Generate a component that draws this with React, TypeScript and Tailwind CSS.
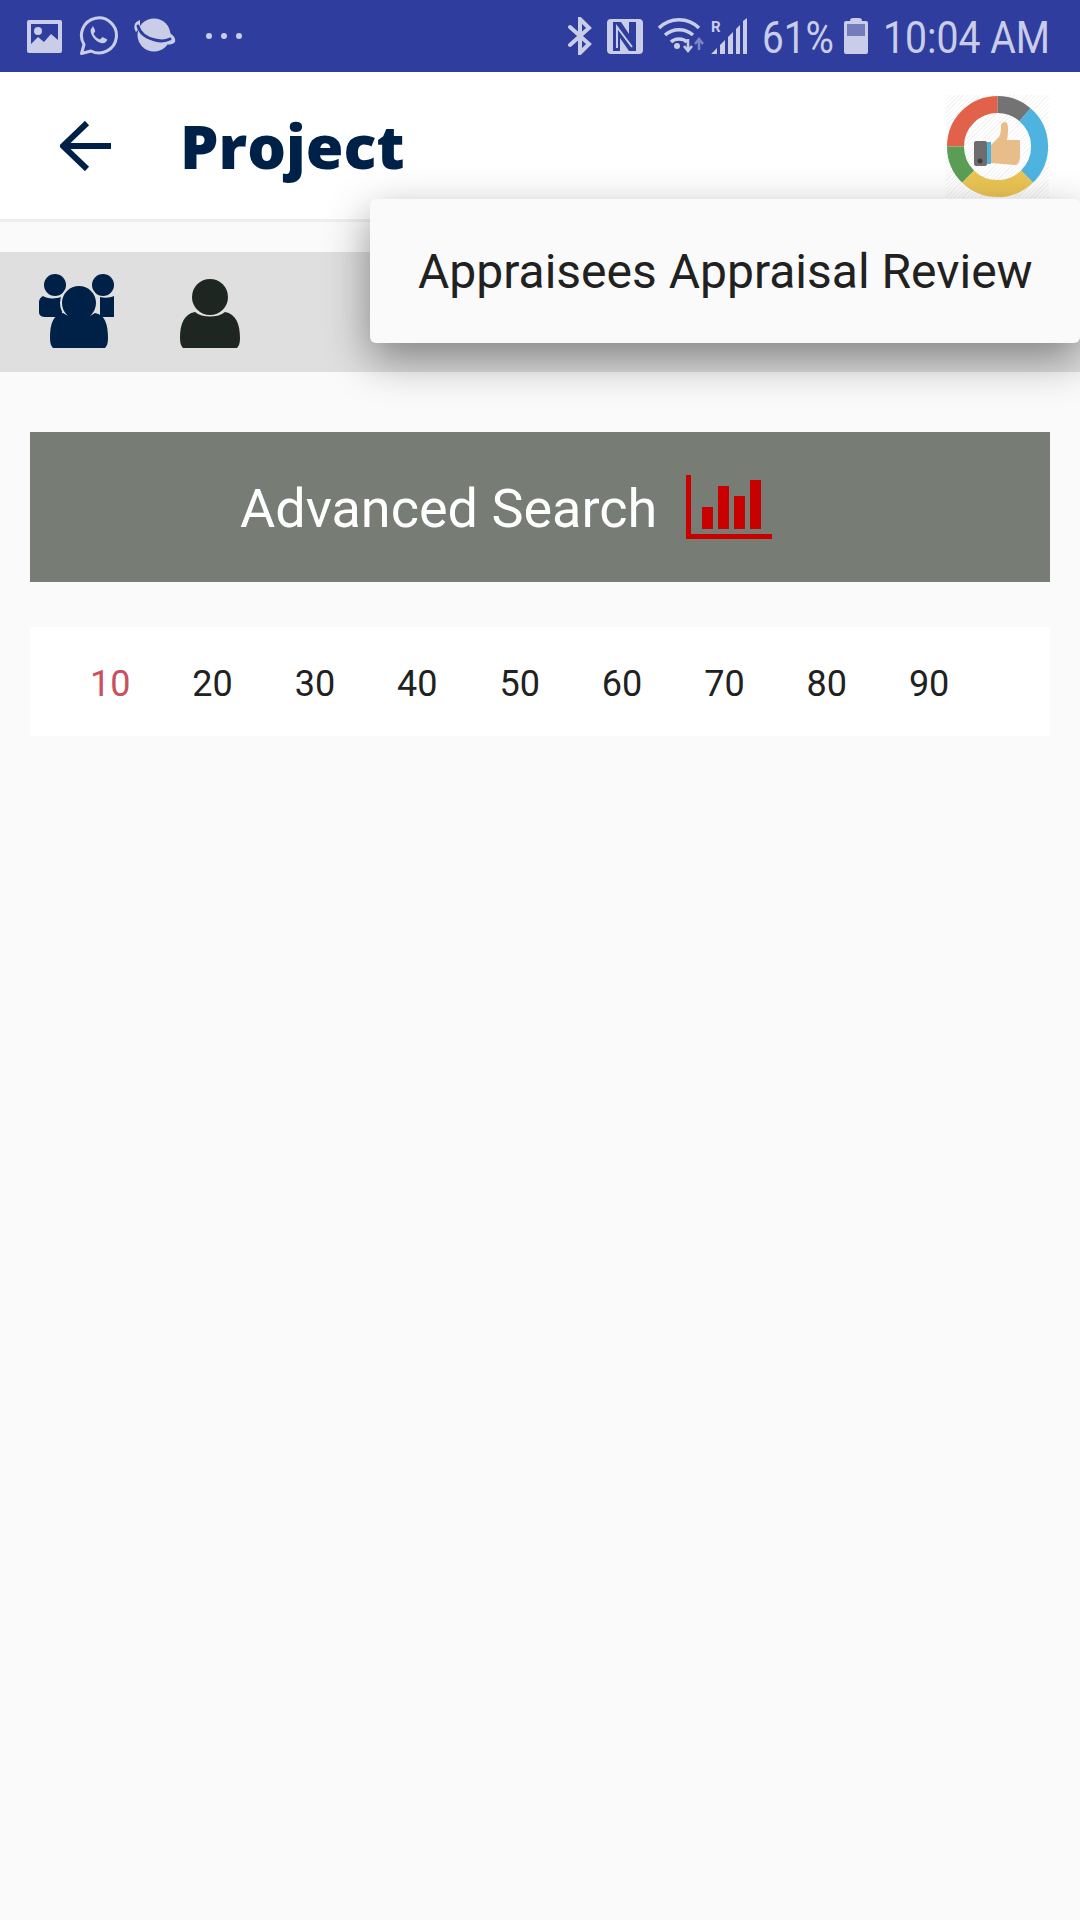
import React from "react";

const S = "#c9cde8";

function StatusLeft() {
  return (
    <div className="flex items-center">
      <svg className="ml-[27px]" width="35" height="33" viewBox="0 0 35 33">
        <path fillRule="evenodd" fill={S} d="M2 0h31a2 2 0 0 1 2 2v29a2 2 0 0 1-2 2H2a2 2 0 0 1-2-2V2a2 2 0 0 1 2-2zM4 4v20l7-7 6 5 7-8 7 6V4z" />
        <circle cx="11" cy="11" r="4" fill={S} />
      </svg>
      <svg className="ml-[17px]" width="40" height="40" viewBox="0 0 40 40">
        <path d="M2.500 37.500l2.500-9A17.500 17.500 0 1 1 12 35z" fill="none" stroke={S} strokeWidth="3" strokeLinejoin="round" />
        <path d="M14 11c-2 1-3 3-2 6 1.500 5 6 9 10 10 3 .7 5-.5 6-2.500.3-.7 0-1.200-.5-1.500l-3.500-1.700c-.6-.2-1-.1-1.400.4l-1 1.300c-.4.400-.8.400-1.300.2-2.500-1-4.300-2.800-5.500-5-.2-.5-.2-.9.200-1.300l1-1.200c.3-.4.300-.8.100-1.200l-1.500-3.500c-.3-.7-.9-.8-1.600-.5z" fill={S} />
      </svg>
      <svg className="ml-[14px]" width="43" height="36" viewBox="0 0 43 36">
        <circle cx="21" cy="17" r="16.500" fill={S} />
        <path d="M7 2C1 4 0 9 3 14l4-4zM35 14c6 3 8 7 7 10-2 3-6 2.500-10 2.500l3-7z" fill={S} />
        <path d="M5 8C7 16 14 20 22 22c6 1.500 11 1 15-1" fill="none" stroke="#2f3e9e" strokeWidth="3" strokeLinecap="round" />
      </svg>
      <div className="ml-[30px] flex gap-[9px]">
        <span className="block h-[6px] w-[6px] rounded-full bg-[#c9cde8]" />
        <span className="block h-[6px] w-[6px] rounded-full bg-[#c9cde8]" />
        <span className="block h-[6px] w-[6px] rounded-full bg-[#c9cde8]" />
      </div>
    </div>
  );
}

function StatusRight() {
  return (
    <div className="flex items-center pr-[32px]">
      <svg width="24" height="38" viewBox="0 0 24 38" className="mr-[15px]">
        <path d="M2 10l19 17-9 9V2l9 9L2 28" fill="none" stroke={S} strokeWidth="4" strokeLinecap="round" />
      </svg>
      <svg width="36" height="35" viewBox="0 0 36 35" className="mr-[14px]">
        <rect width="36" height="35" rx="4" fill={S} />
        <path d="M6 3H14L22 15V3H29V32H22L13 19V32H6Z" fill="#2f3e9e" />
        <path d="M10 29V8L25 28" fill="none" stroke={S} strokeWidth="2" />
      </svg>
      <svg width="50" height="38" viewBox="0 0 50 38" className="mr-[4px]">
        <path d="M2 11c11-11 29-11 40 0M8 18c8-7 20-7 28 0M14 25c4-4 12-4 16 0" fill="none" stroke={S} strokeWidth="3.500" />
        <circle cx="20" cy="29" r="3" fill={S} />
        <path d="M31 22v10M27 29l4 5 4-5" fill="none" stroke={S} strokeWidth="2.500" />
        <path d="M42 33V23M38 27l4-5 4 5" fill="none" stroke="#7d86c4" strokeWidth="2.500" />
      </svg>
      <div className="relative mr-[14px] h-[36px] w-[37px]">
        <svg width="37" height="36" viewBox="0 0 37 36" className="absolute left-0 top-0">
          <path d="M0 36l6-6v6zM9 27l5-5v14H9zM17 19l5-5v22h-5zM25 11l4-4v29h-4zM32 3l4-3v36h-4z" fill={S} />
        </svg>
        <span className="absolute left-0 top-[2px] font-['Roboto'] text-[15px] font-bold leading-[15px] text-[#c9cde8]">R</span>
      </div>
      <span className="mr-[13px] mt-[4px] inline-block w-[69px] origin-left scale-x-[0.88] font-['Roboto'] text-[44px] leading-[44px] whitespace-nowrap text-[#c9cde8]">61%</span>
      <div className="mr-[15px] flex h-[36px] w-[24px] flex-col items-center">
        <div className="h-[3px] w-[12px] rounded-t-sm bg-[#c9cde8]" />
        <div className="flex h-[33px] w-[24px] flex-col rounded-[2px] bg-[#c9cde8] p-[3px]">
          <div className="h-[12px] w-full bg-[#737cbd]" />
        </div>
      </div>
      <span className="mt-[4px] inline-block w-[165px] origin-left scale-x-[0.89] font-['Roboto'] text-[44px] leading-[44px] whitespace-nowrap text-[#c9cde8]">10:04 AM</span>
    </div>
  );
}

function Logo() {
  return (
    <div className="mt-[2px] h-[103px] w-[103px] bg-[repeating-linear-gradient(135deg,#f4f4f4_0,#f4f4f4_1px,#ffffff_1px,#ffffff_3px)]">
      <svg width="103" height="103" viewBox="0 0 103 103">
        <g fill="none" strokeWidth="17">
          <path d="M51.500 9.500A42 42 0 0 0 9.500 51.500" stroke="#e2614a" />
          <path d="M51.500 9.500A42 42 0 0 1 79 19.700" stroke="#737373" />
          <path d="M79 19.700A42 42 0 0 1 81 81.500" stroke="#4fb3e0" />
          <path d="M81 81.500A42 42 0 0 1 22 81.500" stroke="#eac454" />
          <path d="M22 81.500A42 42 0 0 1 9.500 51.500" stroke="#5a9e55" />
        </g>
        <path d="M45 50L53 42C55 38 55 34 55 31C55 28 57 27 59 27C61 27 62 30 62 33C62 37 62 41 61 45H73C74 45 74 46 74 47V62C74 66 72 70 69 70L45 68Z" fill="#e8bd8a" />
        <rect x="41" y="47" width="4" height="22" fill="#4fb3e0" />
        <rect x="28" y="46" width="13" height="25" rx="2" fill="#6d6d6d" />
        <circle cx="34" cy="66" r="2.500" fill="#3d3d3d" />
      </svg>
    </div>
  );
}

function GroupIcon() {
  return (
    <svg width="75" height="74" viewBox="39 274 75 74">
      <circle cx="55" cy="285" r="11" fill="#002147" />
      <circle cx="103" cy="285" r="11" fill="#002147" />
      <path d="M43 296c4 3 12 3 19 1v20H46c-4 0-7-1-7-5v-10c0-3 2-5 4-6z" fill="#002147" />
      <path d="M100 297c4 1 10 1 14-1v21h-14z" fill="#002147" />
      <circle cx="79" cy="303" r="19" fill="#dfdfdf" />
      <circle cx="79" cy="303" r="17" fill="#002147" />
      <path d="M50 338c0-14 3-23 13-25 8 6 24 6 32 0 10 2 13 11 13 25 0 5-1 8-3 10H53c-2-2-3-5-3-10z" fill="#002147" />
    </svg>
  );
}

function PersonIcon() {
  return (
    <svg width="60" height="69" viewBox="180 279 60 69">
      <path d="M180 338c0-14 4-24 15-26 7 6 23 6 30 0 11 2 15 12 15 26 0 5-1 8-3 10H183c-2-2-3-5-3-10z" fill="#1e2622" />
      <circle cx="210" cy="297" r="18" fill="#1e2622" />
    </svg>
  );
}

function ChartIcon() {
  return (
    <svg width="86" height="64" viewBox="686 475 86 64">
      <path d="M686 475h5v59h81v5h-86z" fill="#c80000" />
      <rect x="702" y="507" width="11" height="22" fill="#c80000" />
      <rect x="718" y="486" width="11" height="43" fill="#c80000" />
      <rect x="734" y="496" width="11" height="33" fill="#c80000" />
      <rect x="750" y="480" width="11" height="49" fill="#c80000" />
    </svg>
  );
}

export default function App() {
  const nums = ["20", "30", "40", "50", "60", "70", "80", "90"];
  return (
    <div className="relative flex h-[1920px] w-[1080px] flex-col overflow-hidden bg-[#fafafa] font-['Roboto',sans-serif]">
      <div className="flex h-[72px] items-center justify-between bg-[#2f3e9e]">
        <StatusLeft />
        <StatusRight />
      </div>

      <div className="flex h-[150px] items-center border-b-[3px] border-[#eeeeee] bg-white pl-[60px] pr-[31px]">
        <svg width="52" height="50" viewBox="0 0 52 50" className="shrink-0">
          <path d="M51 25H4M27 2L3 25l24 23" fill="none" stroke="#002147" strokeWidth="6" />
        </svg>
        <span className="ml-[68px] font-['Open_Sans',sans-serif] text-[61px] font-extrabold leading-none text-[#002147]">Project</span>
        <div className="ml-auto">
          <Logo />
        </div>
      </div>

      <div className="mt-[30px] flex h-[120px] items-center bg-[#dfdfdf] pl-[39px]">
        <div className="mt-[-2px]"><GroupIcon /></div>
        <div className="ml-[66px] mt-[3px]"><PersonIcon /></div>
      </div>

      <div className="mx-[30px] mt-[60px] flex h-[150px] items-center bg-[#777d75] pl-[210px]">
        <span className="mt-[4px] text-[54px] leading-none whitespace-nowrap text-white">Advanced Search</span>
        <div className="ml-[29px]"><ChartIcon /></div>
      </div>

      <div className="mx-[30px] mt-[45px] flex h-[109px] items-center gap-[61.9px] bg-white pl-[60px]">
        <span className="mt-[4px] text-[36px] leading-none text-[#c8505f]">10</span>
        {nums.map((n) => (
          <span key={n} className="mt-[4px] text-[36px] leading-none text-[#212121]">{n}</span>
        ))}
      </div>

      <div className="absolute left-[370px] top-[199px] flex h-[144px] w-[710px] items-center rounded-[6px] bg-[#fafafa] pl-[48px] shadow-[0_16px_44px_rgba(0,0,0,0.42)]">
        <span className="mt-[2px] text-[48px] leading-none whitespace-nowrap text-[#212121]">Appraisees Appraisal Review</span>
      </div>
    </div>
  );
}
